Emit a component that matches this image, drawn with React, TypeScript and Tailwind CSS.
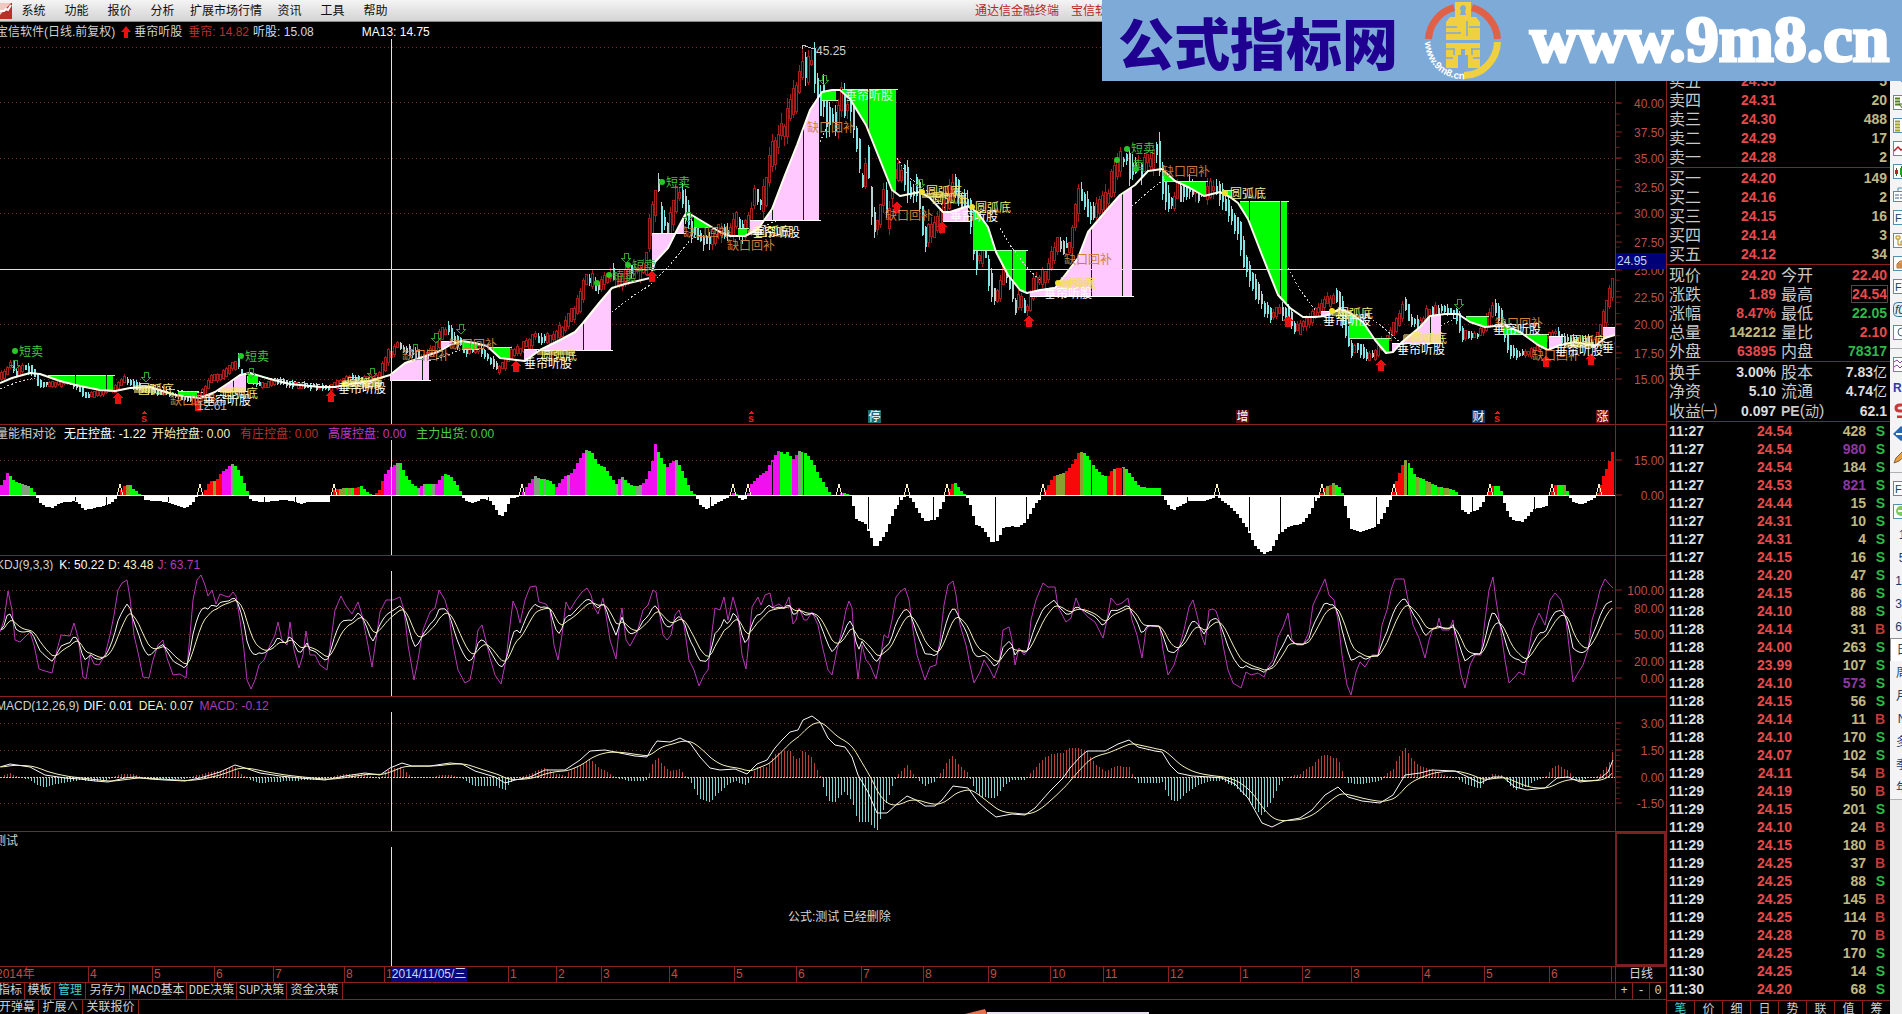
import React from "react";

type Pt = [number, number];

const parse = (s: string): Pt[] =>
  s
    .trim()
    .split(/\s+/)
    .map((p) => p.split(",").map(Number) as Pt);

const at = (pts: Pt[], x: number) => {
  if (x <= pts[0][0]) return pts[0][1];
  for (let i = 1; i < pts.length; i++) {
    if (x <= pts[i][0]) {
      const [x0, y0] = pts[i - 1];
      const [x1, y1] = pts[i];
      return x1 === x0 ? y1 : y0 + ((y1 - y0) * (x - x0)) / (x1 - x0);
    }
  }
  return pts[pts.length - 1][1];
};

const toPoints = (pts: Pt[]) => pts.map(([x, y]) => `${x},${y.toFixed(1)}`).join(" ");

const noise = (n: number) => {
  const v = Math.sin(n * 127.1 + 11.7) * 43758.5453;
  return v - Math.floor(v);
};

const PLOT_W = 1615;
const CROSS_X = 391;

/* ---------- price series ---------- */

const PRICE = parse(`0,378 8,370 12,362 15,374 22,368 32,370 40,384 55,384 70,380 80,388 84,396 100,393 115,388 125,378 130,382
145,390 170,394 185,398 195,401 205,390 212,378 222,376 230,368 238,362 240,375 250,380 260,385 280,382 300,385 330,388 350,378 365,380
380,375 388,356 398,345 410,352 420,358 435,350 442,332 448,328 455,340 462,345 466,350 480,350 492,362 498,369 506,362 512,352 520,350
528,343 535,337 545,340 555,336 562,330 568,320 573,315 580,303 583,287 587,280 593,283 600,285 610,275 620,280 630,270 640,272 646,262
650,228 655,205 658,188 661,220 667,230 673,215 676,197 682,195 685,210 690,225 700,235 707,245 713,240 720,228 730,230 736,222 742,230
750,222 755,195 760,205 766,188 772,155 776,145 780,132 785,135 790,110 796,95 800,75 803,60 807,80 811,62 814,72 817,95 823,100 830,120
838,115 840,95 845,110 851,105 857,140 862,180 868,165 872,210 876,230 885,190 888,225 893,175 898,175 905,170 910,190 918,190 925,240
932,230 940,220 946,205 952,182 958,190 962,200 970,210 975,260 985,255 992,290 998,300 1004,270 1010,280 1015,305 1022,300 1028,313
1034,285 1042,280 1050,265 1058,245 1070,250 1075,215 1080,190 1087,205 1094,215 1100,205 1107,200 1112,185 1118,160 1125,155 1132,170
1140,168 1150,160 1158,148 1164,190 1171,205 1178,190 1190,190 1202,195 1212,188 1220,195 1230,215 1238,225 1243,255 1250,275 1256,290
1263,305 1272,318 1280,308 1287,312 1296,330 1304,325 1312,315 1320,308 1330,300 1335,296 1341,305 1346,330 1351,350 1358,345 1365,355
1375,356 1380,345 1388,340 1396,325 1402,310 1405,302 1410,320 1420,322 1430,312 1440,310 1450,312 1458,315 1462,335 1470,335 1480,333
1488,320 1494,308 1500,315 1505,335 1510,350 1520,355 1535,350 1545,340 1555,333 1565,340 1580,340 1595,345 1602,330 1606,310 1612,290 1615,278`);

const MA = parse(`0,383 12,378 30,373 40,374 60,381 80,386 100,390 115,391 130,388 150,387 175,395 200,398 215,392 230,382 240,375 250,373
270,379 290,384 320,387 335,387 350,384 370,381 390,375 405,363 420,358 440,351 452,344 462,341 475,343 487,346 500,358 525,361 540,350
560,340 575,332 583,323 600,302 612,288 625,284 650,278 655,262 668,248 678,228 685,215 690,214 705,223 720,232 730,236 745,236 758,229
772,209 785,175 797,145 810,110 822,92 832,90 840,90 850,99 866,125 878,155 892,190 900,196 910,194 920,192 930,198 943,212 950,212
968,206 978,213 988,227 996,252 1008,275 1020,290 1027,293 1040,290 1055,288 1065,275 1078,258 1088,232 1105,212 1120,195 1135,185
1148,171 1162,169 1175,181 1190,188 1204,196 1220,192 1230,197 1238,203 1248,219 1262,255 1278,295 1290,308 1303,317 1315,317 1325,316
1340,309 1350,313 1363,322 1375,340 1386,353 1393,352 1402,342 1420,327 1430,316 1445,314 1458,314 1470,322 1485,327 1505,325 1520,332
1538,345 1548,350 1560,345 1575,342 1595,346 1605,338 1615,335`);

const LAGGED = [
  "0,389 15,383 35,378",
  "150,384 175,390 205,393",
  "262,377 290,381 330,386",
  "425,362 440,358 460,350",
  "612,312 630,298 650,285 670,265 690,240 702,234",
  "760,228 778,220",
  "820,142 824,133 830,120",
  "897,158 910,178 928,192 945,208",
  "1000,228 1010,245 1028,269 1040,280",
  "1132,206 1150,190 1165,179",
  "1288,268 1300,290 1316,311",
  "1366,315 1380,325 1400,342",
  "1440,326 1458,317",
].map(parse);

const PINK = "#ffc8ff";
const GREEN = "#00ff00";

const FILLS: [number, number, number, string][] = [
  [48, 113, 375, GREEN],
  [178, 197, 391, GREEN],
  [218, 246, 391, PINK],
  [248, 258, 383, GREEN],
  [390, 429, 380, PINK],
  [441, 452, 341, PINK],
  [462, 477, 349, GREEN],
  [488, 510, 347, GREEN],
  [524, 537, 349, PINK],
  [540, 611, 350, PINK],
  [652, 684, 233, PINK],
  [694, 716, 227, GREEN],
  [738, 747, 228, GREEN],
  [750, 819, 220, PINK],
  [822, 836, 100, GREEN],
  [842, 896, 89, GREEN],
  [943, 968, 221, PINK],
  [973, 1026, 250, GREEN],
  [1030, 1132, 296, PINK],
  [1164, 1206, 181, GREEN],
  [1222, 1232, 190, GREEN],
  [1240, 1287, 201, GREEN],
  [1321, 1336, 311, PINK],
  [1349, 1389, 338, GREEN],
  [1392, 1441, 343, PINK],
  [1466, 1487, 316, GREEN],
  [1503, 1547, 334, GREEN],
  [1549, 1562, 336, PINK],
  [1603, 1615, 327, PINK],
];

const YELLOW_BANDS: [number, number, number, number][] = [
  [134, 385, 20, 8],
  [220, 387, 26, 6],
  [342, 380, 40, 7],
  [537, 351, 38, 4],
  [748, 229, 14, 6],
  [922, 193, 26, 5],
  [1058, 280, 36, 6],
  [1332, 310, 20, 6],
  [1403, 334, 38, 8],
  [1564, 342, 30, 6],
];

const FILL_MARKS = [75, 106, 233, 422, 583, 772, 803, 868, 1012, 1091, 1122, 1249, 1280, 1430];

const TEXTS: [number, number, string, string][] = [
  [170, 400, "缺口回补", "#d0803c"],
  [402, 355, "缺口回补", "#d0803c"],
  [449, 344, "缺口回补", "#d0803c"],
  [683, 232, "缺口回补", "#d0803c"],
  [727, 245, "缺口回补", "#d0803c"],
  [807, 127, "缺口回补", "#d0803c"],
  [885, 215, "缺口回补", "#d0803c"],
  [1064, 259, "缺口回补", "#d0803c"],
  [1162, 171, "缺口回补", "#c07848"],
  [1495, 323, "缺口回补", "#d0803c"],
  [1532, 355, "缺口回补", "#d0803c"],
  [138, 389, "圆弧底", "#f0e878"],
  [222, 393, "圆弧底", "#f0e878"],
  [347, 383, "圆弧底", "#f0e878"],
  [541, 355, "圆弧底", "#f0e878"],
  [755, 231, "圆弧底", "#f0e878"],
  [926, 191, "圆弧底", "#f0e878"],
  [932, 198, "圆弧底", "#f0e060"],
  [975, 207, "圆弧底", "#f0e878"],
  [1060, 283, "圆弧底", "#f0e050"],
  [1230, 193, "圆弧底", "#f0e8a0"],
  [1337, 313, "圆弧底", "#f0e878"],
  [1411, 338, "圆弧底", "#f0e878"],
  [1570, 341, "圆弧底", "#f0e878"],
  [203, 400, "垂帘听股", "#ffffff"],
  [338, 388, "垂帘听股", "#ffffff"],
  [524, 363, "垂帘听股", "#ffffff"],
  [752, 232, "垂帘听股", "#ffffff"],
  [845, 95, "垂帘听股", "#d8ffd8"],
  [950, 216, "垂帘听股", "#ffffff"],
  [1044, 293, "垂帘听股", "#ffffff"],
  [1323, 320, "垂帘听股", "#ffffff"],
  [1397, 349, "垂帘听股", "#ffffff"],
  [1493, 329, "垂帘听股", "#ffffff"],
  [1555, 350, "垂帘听股", "#ffffff"],
  [1602, 347, "垂帘", "#ffffff"],
  [19, 351, "短卖", "#40c840"],
  [245, 356, "短卖", "#40c840"],
  [632, 265, "短卖", "#40b040"],
  [612, 276, "短卖", "#40b040"],
  [666, 182, "短卖", "#40c840"],
  [1131, 148, "短卖", "#40c840"],
  [1132, 165, "卖", "#30b030"],
  [816, 50, "45.25", "#d0d0d0"],
  [197, 405, "12.61", "#b8b8b8"],
];

const DOTS: Pt[] = [
  [15, 351], [241, 356], [597, 283], [609, 275], [628, 265], [662, 182], [1117, 160], [1127, 149], [1136, 169],
];
const YELLOW_DOTS: Pt[] = [[922, 192], [972, 207], [1225, 193], [1332, 311], [345, 384], [1058, 283]];
const DOWN_ARROWS: Pt[] = [
  [15, 365], [146, 377], [251, 373], [372, 373], [415, 349], [436, 338], [461, 329], [626, 258], [688, 217], [824, 80], [920, 184], [1459, 304],
];
const UP_ARROWS: Pt[] = [
  [118, 398], [198, 405], [331, 396], [516, 366], [652, 276], [897, 207], [942, 227], [1029, 321], [1288, 321], [1381, 365], [1546, 361], [1591, 359],
];

const BADGES: [number, string, string][] = [
  [868, "停", "#1c6c70"],
  [1236, "增", "#5a0c10"],
  [1472, "财", "#123a66"],
  [1596, "涨", "#6a0c14"],
];

/* ---------- lower indicators ---------- */

const ENERGY = parse(`0,8 4,14 8,23 11,20 15,15 20,13 27,11 33,8 37,0 40,-6 45,-10 53,-12 60,-7 75,-5 80,-8 85,-14 95,-12 105,-10 115,-5
118,0 120,3 124,10 130,12 133,8 138,4 143,0 146,-4 155,-5 168,-6 180,-10 186,-12 193,-8 197,-1 200,0 205,4 210,14 217,16 222,23 228,28
234,33 238,28 244,16 248,5 250,0 252,-5 265,-6 285,-4 297,-6 300,-8 310,-6 329,-6 331,0 336,7 347,8 355,8 362,10 368,4 374,1 380,6
385,21 391,28 397,33 401,33 407,20 415,10 420,8 425,12 437,12 445,23 452,19 460,8 463,0 466,-5 475,-7 482,-3 490,-4 496,-12 502,-22
507,-14 511,-2 520,-1 522,0 526,8 535,20 542,17 550,16 557,9 565,20 573,23 580,37 586,46 592,45 598,33 606,28 612,18 617,12 622,20
628,14 636,9 646,14 652,30 656,52 660,42 667,28 672,34 678,36 685,20 692,5 697,0 700,-8 708,-14 715,-8 725,-3 732,0 735,5 738,0 740,-2
745,-5 748,0 752,12 760,20 767,25 775,40 780,46 785,42 789,45 793,36 800,45 806,43 813,35 820,20 828,8 832,0 838,0 842,3 850,2 852,0
853,-5 857,-23 866,-28 876,-52 880,-47 887,-36 895,-15 903,-2 907,0 912,-2 916,-10 925,-25 937,-24 942,-10 947,0 949,5 955,15 960,7
966,1 970,-5 976,-28 984,-32 992,-46 998,-45 1004,-32 1012,-30 1018,-32 1027,-25 1035,-10 1042,-1 1043,0 1048,10 1055,20 1066,24
1074,33 1080,45 1087,42 1096,28 1104,20 1109,20 1113,27 1125,29 1131,22 1140,10 1148,8 1160,8 1163,0 1166,-4 1173,-15 1180,-10 1190,-5
1205,-5 1213,-2 1217,0 1221,-3 1230,-10 1240,-20 1248,-33 1256,-50 1264,-58 1272,-54 1280,-38 1290,-30 1302,-28 1310,-18 1316,-5
1321,0 1324,8 1334,13 1341,8 1344,0 1346,-10 1352,-33 1362,-36 1378,-30 1386,-15 1393,0 1397,15 1405,37 1410,32 1416,20 1428,15
1440,9 1452,7 1458,3 1460,0 1462,-13 1468,-18 1480,-13 1487,0 1493,10 1500,10 1503,2 1506,-12 1513,-24 1523,-26 1535,-13 1547,-10
1550,0 1556,11 1567,11 1569,0 1574,-6 1582,-9 1593,-3 1597,0 1604,20 1610,35 1615,50`);

const SPIKES = [120, 200, 334, 522, 733, 748, 839, 907, 947, 1043, 1217, 1322, 1394, 1490, 1552, 1599];
const RED_RUNS: [number, number][] = [[116, 134], [198, 221], [330, 362], [370, 382], [896, 1615]];
const ENERGY_MARKS = [75, 106, 168, 264, 295, 488, 710, 772, 803, 868, 899, 933, 995, 1026, 1091, 1122, 1187, 1249, 1280, 1314, 1376, 1407, 1472, 1534];

const J_LINE = parse(`0,632 4,620 8,591 12,610 15,640 20,642 25,637 30,632 34,645 39,669 45,671 52,673 57,650 61,635 70,636 74,623 78,637
83,677 86,679 90,655 94,664 99,665 105,655 110,635 114,615 118,590 122,583 127,580 130,598 134,635 139,657 143,677 149,678 153,660
158,645 163,640 167,658 173,675 180,674 186,678 190,635 193,600 197,580 201,575 205,585 208,596 212,590 216,604 220,594 225,596 229,597
233,592 236,596 240,620 244,650 247,680 251,689 255,680 259,665 264,660 270,645 275,635 278,622 282,640 287,645 290,622 294,650 299,668
303,655 306,631 310,655 315,655 320,665 327,670 331,640 335,610 341,596 346,606 352,614 358,602 362,615 367,640 372,667 376,640 380,612
386,600 393,600 400,597 404,610 408,645 414,680 418,660 423,630 430,612 435,608 439,590 445,600 449,615 453,645 458,670 465,683 470,680
474,660 478,630 482,625 487,645 490,658 495,675 501,684 506,660 510,625 513,601 517,610 520,623 525,600 530,587 536,586 539,602 546,604
550,610 554,645 558,660 562,635 566,602 570,610 576,600 582,592 587,588 591,595 594,607 598,614 603,598 606,615 610,640 616,659 620,620
622,608 626,640 630,646 637,633 643,610 648,605 653,590 656,592 659,610 663,635 667,640 671,635 675,615 679,610 684,625 689,660 694,670
699,686 704,675 708,670 711,640 715,608 720,610 724,597 728,620 733,597 738,615 742,655 746,669 749,640 752,607 758,597 761,605 765,595
770,593 773,607 779,604 784,608 789,597 793,624 796,620 799,608 804,620 807,620 812,612 818,625 822,645 828,670 832,675 837,650 842,630
846,610 849,601 852,608 855,650 858,679 862,645 866,660 870,665 876,679 880,660 884,635 888,638 892,620 896,597 900,592 905,588 909,600
913,630 917,655 925,680 930,667 936,665 940,640 944,605 948,585 953,581 956,595 960,625 966,645 970,665 974,683 980,672 984,660 989,668
994,678 999,665 1003,630 1009,627 1012,640 1015,665 1019,648 1024,655 1028,650 1031,620 1036,600 1043,583 1048,587 1055,587 1058,607
1066,622 1071,618 1076,598 1080,608 1088,617 1095,622 1103,638 1107,620 1111,598 1117,605 1122,603 1128,598 1132,620 1137,635 1142,658
1146,630 1149,626 1160,627 1163,650 1168,675 1174,665 1179,648 1184,630 1189,607 1193,600 1197,615 1202,637 1205,645 1209,610 1213,609
1216,611 1219,620 1223,645 1228,670 1233,683 1241,688 1246,672 1251,675 1258,673 1264,677 1268,667 1273,660 1278,637 1283,627 1288,613
1292,640 1297,645 1303,645 1309,632 1313,605 1319,592 1325,579 1329,595 1334,600 1338,620 1342,655 1347,685 1351,695 1356,672 1360,662
1365,667 1372,655 1378,655 1382,625 1387,610 1391,590 1395,579 1404,579 1408,600 1413,625 1419,638 1425,658 1429,640 1433,628 1437,627
1439,618 1442,630 1449,630 1453,620 1456,645 1461,675 1465,688 1470,665 1475,655 1481,655 1485,620 1489,590 1493,577 1496,600 1500,625
1505,660 1509,683 1514,678 1519,672 1524,675 1528,655 1532,630 1539,613 1545,625 1550,600 1555,593 1561,600 1566,620 1570,655 1573,682
1578,673 1583,665 1588,650 1592,620 1596,607 1600,590 1605,579 1609,584 1613,588`);

const DIF = parse(`0,767 10,764 30,767 45,775 65,778 80,779 95,781 108,782 125,778 135,777 150,779 165,780 185,781 200,778 220,772
235,765 245,768 260,773 280,776 300,778 325,780 345,776 365,773 380,775 390,768 402,763 412,766 430,766 450,763 462,764 475,771 495,777
505,783 515,780 530,777 545,770 565,770 580,760 590,751 605,750 620,753 635,756 647,757 652,748 657,741 670,742 680,738 690,743 700,757
710,768 720,770 735,769 747,774 757,764 767,760 775,748 782,740 790,732 798,730 803,720 812,716 820,722 828,738 835,745 845,747 852,757
858,775 868,792 877,813 887,813 897,804 907,796 916,800 925,806 935,806 942,800 953,786 968,788 978,802 987,810 996,817 1012,814
1025,815 1035,808 1050,791 1063,778 1070,768 1080,757 1087,751 1105,751 1118,744 1129,740 1138,747 1155,751 1162,752 1170,765 1178,773
1192,776 1210,777 1222,778 1235,784 1248,798 1262,823 1272,827 1284,821 1300,818 1312,810 1325,795 1338,787 1348,797 1362,801 1380,803
1393,795 1405,775 1420,773 1432,770 1455,771 1468,777 1480,783 1493,777 1503,777 1515,787 1527,790 1545,788 1557,778 1568,777 1580,782
1598,780 1608,772 1613,760`);

const STEP = 3;
const XS = Array.from({ length: Math.floor(PLOT_W / STEP) }, (_, i) => i * STEP + 1);

const KD = (() => {
  const k: Pt[] = [];
  const d: Pt[] = [];
  let prev = 630;
  for (const x of XS) {
    const kv = (3 * at(J_LINE, x) + 4 * prev) / 7;
    prev = (2 * prev + kv) / 3;
    k.push([x, kv]);
    d.push([x, prev]);
  }
  return { k, d };
})();

const DEA = (() => {
  let prev = 767;
  return XS.map((x): Pt => {
    prev = prev * 0.79 + at(DIF, x) * 0.21;
    return [x, prev];
  });
})();

/* ---------- drawing helpers ---------- */

function Plot({ top, height, children }: { top: number; height: number; children?: React.ReactNode }) {
  return (
    <svg
      className="block min-h-0 w-full flex-1"
      viewBox={`0 ${top} ${PLOT_W} ${height}`}
      preserveAspectRatio="none"
      fontSize="12"
      shapeRendering="crispEdges"
    >
      {children}
      <line x1={CROSS_X + 0.5} x2={CROSS_X + 0.5} y1={top} y2={top + height} stroke="#e0e0e0" />
    </svg>
  );
}

function Grid({ ys }: { ys: number[] }) {
  return (
    <g stroke="#7a2c22" strokeDasharray="1 3">
      {ys.map((y) => (
        <line key={y} x1="0" x2={PLOT_W} y1={y + 0.5} y2={y + 0.5} />
      ))}
    </g>
  );
}

function Axis({
  top,
  height,
  labels,
  minor = 0,
  children,
}: {
  top: number;
  height: number;
  labels: [number, string][];
  minor?: number;
  children?: React.ReactNode;
}) {
  const first = labels[0]?.[0] ?? 0;
  const last = labels[labels.length - 1]?.[0] ?? 0;
  const ticks = minor ? Array.from({ length: Math.floor((last - first) / minor) + 1 }, (_, i) => first + i * minor) : [];
  return (
    <svg
      className="block h-full w-[51px] shrink-0 border-l border-[#8a2020]"
      viewBox={`0 ${top} 50 ${height}`}
      preserveAspectRatio="none"
      fontSize="12"
      fill="#b8524a"
    >
      {ticks.map((y) => (
        <line key={y} x1="0" x2="4" y1={y} y2={y} stroke="#5a1818" />
      ))}
      {labels.map(([y, t]) => (
        <g key={y}>
          <line x1="0" x2="6" y1={y} y2={y} stroke="#8a2020" />
          <text x="48" y={y + 5} textAnchor="end">
            {t}
          </text>
        </g>
      ))}
      {children}
    </svg>
  );
}

function Panel({
  title,
  first,
  axis,
  children,
}: {
  title: React.ReactNode;
  first?: boolean;
  axis: React.ReactNode;
  children: React.ReactNode;
}) {
  return (
    <section className={`flex min-h-0 ${first ? "" : "border-t border-[#8a2020]"}`}>
      <div className="flex min-w-0 flex-1 flex-col overflow-hidden">
        <h2 className={`flex shrink-0 items-center overflow-hidden whitespace-nowrap ${first ? "h-[17px] pt-0.5" : "h-[15px] pt-0.5"}`}>{title}</h2>
        {children}
      </div>
      {axis}
    </section>
  );
}

function Candles() {
  return (
    <g>
      {XS.map((x, i) => {
        const y = at(PRICE, x);
        const slope = at(PRICE, x + 3) - at(PRICE, x - 3);
        const amp = 1 + (420 - y) * 0.035;
        const up = slope + (noise(i) - 0.5) * amp * 1.3 < 0;
        const mid = y + (noise(i + 900) - 0.5) * amp;
        const body = 1 + noise(i + 300) * amp * 0.8 + Math.min(Math.abs(slope) * 0.3, 9);
        const hi = mid - body - noise(i + 50) * amp;
        const lo = mid + body + noise(i + 70) * amp;
        const color = up ? "#a81c1c" : noise(i + 5) > 0.25 ? "#7fe4e4" : "#b8d0d0";
        return (
          <g key={x}>
            <line x1={x + 0.5} x2={x + 0.5} y1={hi} y2={lo} stroke={color} />
            <rect x={x - 0.5} y={mid - body} width="2" height={body * 2} fill={up ? "#000" : color} stroke={color} strokeWidth={up ? 1 : 0} />
          </g>
        );
      })}
    </g>
  );
}

function fillPoints(x0: number, x1: number, flat: number) {
  const xs = [x0, ...MA.map((p) => p[0]).filter((x) => x > x0 && x < x1), x1];
  return `${x0},${flat} ${toPoints(xs.map((x): Pt => [x, at(MA, x)]))} ${x1},${flat}`;
}

function DividendMark({ x }: { x: number }) {
  return (
    <g fill="#e02020">
      <path d={`M${x} 411l-3 3h6z`} />
      <text x={x - 3} y="422" fontSize="11" fontWeight="bold">
        s
      </text>
    </g>
  );
}

function PricePlot() {
  return (
    <Plot top={39} height={385}>
      <Grid ys={[47, 102, 158, 213, 324, 379]} />
      <Candles />
      {FILLS.map(([x0, x1, flat, color]) => (
        <g key={`${x0}-${flat}`}>
          <polygon points={fillPoints(x0, x1, flat)} fill={color} />
          <line x1={x0} x2={x1 + 2} y1={flat + 0.5} y2={flat + 0.5} stroke={color === PINK ? "#fff" : "#b0ffb0"} />
        </g>
      ))}
      {FILL_MARKS.map((x) => {
        const f = FILLS.find(([a, b]) => x > a && x < b);
        return f ? <line key={x} x1={x + 0.5} x2={x + 0.5} y1={f[2]} y2={at(MA, x)} stroke="#102010" /> : null;
      })}
      <g fill="#f8d878">
        {YELLOW_BANDS.map(([x, y, w, h]) => (
          <rect key={x} x={x} y={y} width={w} height={h} rx="2" opacity="0.6" />
        ))}
      </g>
      <g fill="none" stroke="#d0d0d0" strokeDasharray="2 2">
        {LAGGED.map((l) => (
          <polyline key={l[0][0]} points={toPoints(l)} />
        ))}
      </g>
      <polyline points={toPoints(MA)} fill="none" stroke="#fffff0" strokeWidth="2" strokeLinejoin="round" shapeRendering="auto" />
      <line x1="0" x2={PLOT_W} y1="269.5" y2="269.5" stroke="#e0e0e0" />
      <g fill="none" stroke="#30a030">
        {DOWN_ARROWS.map(([x, y]) => (
          <path key={x} d={`M${x - 2} ${y - 5}h4v5h3l-5 5l-5 -5h3z`} />
        ))}
      </g>
      <g fill="#e81010">
        {UP_ARROWS.map(([x, y]) => (
          <path key={x} d={`M${x} ${y - 6}l5 6h-2v6h-6v-6h-2z`} />
        ))}
      </g>
      <g fill="#28c828" shapeRendering="auto">
        {DOTS.map(([x, y]) => (
          <circle key={x} cx={x} cy={y} r="3" />
        ))}
      </g>
      <g fill="#f0e030" shapeRendering="auto">
        {YELLOW_DOTS.map(([x, y]) => (
          <circle key={x} cx={x} cy={y} r="3" />
        ))}
      </g>
      <path d="M802 49v-4h4M802 45l12 4" fill="none" stroke="#c8c8c8" />
      {TEXTS.map(([x, y, t, c]) => (
        <text key={`${x}-${y}`} x={x} y={y + 5} fill={c}>
          {t}
        </text>
      ))}
      <DividendMark x={144} />
      <DividendMark x={751} />
      <DividendMark x={1497} />
      {BADGES.map(([x, t, c]) => (
        <g key={t}>
          <rect x={x} y="410" width="13" height="13" fill={c} />
          <text x={x + 0.5} y="421" fill="#fff">
            {t}
          </text>
        </g>
      ))}
    </Plot>
  );
}

function EnergyPlot() {
  const base = 496;
  return (
    <Plot top={440} height={115}>
      <Grid ys={[460]} />
      {XS.map((x, i) => {
        const v = at(ENERGY, x + 1);
        if (Math.abs(v) < 0.6) return null;
        const rising = at(ENERGY, x + 3) > at(ENERGY, x - 1) + 0.2;
        const flat = Math.abs(at(ENERGY, x + 3) - at(ENERGY, x - 1)) < 2.2 && noise(i + 41) > 0.6;
        const red = RED_RUNS.some(([a, b]) => x >= a && x <= b);
        const rise = red ? "#f80808" : "#f010f0";
        const color = v < 0 ? "#ffffff" : flat ? (red ? "#88a030" : "#80a080") : rising ? rise : GREEN;
        return <rect key={x} x={x - 1} y={v > 0 ? base - v : base} width="3" height={Math.abs(v)} fill={color} />;
      })}
      {ENERGY_MARKS.map((x) => {
        const v = at(ENERGY, x);
        return <line key={x} x1={x + 0.5} x2={x + 0.5} y1={base + 1} y2={base - v} stroke="#000" />;
      })}
      <line x1="0" x2={PLOT_W} y1={base - 0.5} y2={base - 0.5} stroke="#fff8d0" />
      {SPIKES.map((x) => (
        <path key={x} d={`M${x - 3} ${base}L${x} ${base - 12}L${x + 3} ${base}`} fill="none" stroke="#f8f0c0" />
      ))}
    </Plot>
  );
}

function KdjPlot() {
  return (
    <Plot top={571} height={125}>
      <Grid ys={[590, 608, 634, 661, 678]} />
      <g fill="none" shapeRendering="auto">
        <polyline points={toPoints(J_LINE)} stroke="#b838b8" />
        <polyline points={toPoints(KD.k)} stroke="#f8f8f8" />
        <polyline points={toPoints(KD.d)} stroke="#f4f0b8" />
      </g>
    </Plot>
  );
}

function MacdPlot() {
  const base = 777.5;
  return (
    <Plot top={712} height={119}>
      <Grid ys={[723, 750, 803]} />
      {DEA.map(([x, dea]) => {
        const v = 2.3 * (dea - at(DIF, x));
        return <line key={x} x1={x + 0.5} x2={x + 0.5} y1={base} y2={base - v} stroke={v > 0 ? "#b84038" : "#80d0d0"} />;
      })}
      <line x1="0" x2={PLOT_W} y1={base} y2={base} stroke="#d0c8b0" strokeDasharray="2 1" />
      <g fill="none" shapeRendering="auto">
        <polyline points={toPoints(DIF)} stroke="#f8f8f8" />
        <polyline points={toPoints(DEA)} stroke="#f4f0b8" />
      </g>
    </Plot>
  );
}

/* ---------- time scale ---------- */

const MONTHS: [number, string][] = [
  [0, "2014年"], [89, "4"], [153, "5"], [215, "6"], [274, "7"], [345, "8"], [385, "1"], [509, "1"], [557, "2"], [602, "3"], [670, "4"],
  [735, "5"], [797, "6"], [862, "7"], [924, "8"], [989, "9"], [1051, "10"], [1104, "11"], [1169, "12"], [1241, "1"], [1303, "2"],
  [1352, "3"], [1423, "4"], [1485, "5"], [1550, "6"], [1612, ""], [1615, ""],
];

function TimeScale() {
  return (
    <div className="flex h-4 shrink-0 border-t border-[#8a2020]">
      <div className="relative flex min-w-0 flex-1 text-[12px] leading-[15px] text-[#c04c44]">
        {MONTHS.slice(0, -1).map(([x, label], i) => (
          <span
            key={x}
            className={`box-content basis-0 overflow-hidden whitespace-nowrap ${i ? "-ml-px border-l border-[#8a2020]" : ""}`}
            style={{ flexGrow: MONTHS[i + 1][0] - x }}
          >
            <span className={i ? "pl-px" : "-ml-1"}>{label}</span>
          </span>
        ))}
        <span className="absolute inset-y-0 left-[24.2%] bg-[#08087c] px-px whitespace-nowrap text-[#c8d8f8]">2014/11/05/三</span>
      </div>
      <div className="w-[51px] shrink-0 border-l border-[#8a2020] text-center text-[12px] leading-[15px] text-[#d8d8d8]">日线</div>
    </div>
  );
}

/* ---------- quote column ---------- */

const SELLS = [["卖五", "24.35", "5"], ["卖四", "24.31", "20"], ["卖三", "24.30", "488"], ["卖二", "24.29", "17"], ["卖一", "24.28", "2"]];
const BUYS = [["买一", "24.20", "149"], ["买二", "24.16", "2"], ["买三", "24.15", "16"], ["买四", "24.14", "3"], ["买五", "24.12", "34"]];

const RED = "text-[#e84a4a]";
const GRN = "text-[#30b848]";
const SAND = "text-[#c0b884]";
const WHT = "text-[#dcdcdc]";

const STATS = [
  ["现价", "24.20", RED, "今开", "22.40", RED],
  ["涨跌", "1.89", RED, "最高", "24.54", RED],
  ["涨幅", "8.47%", RED, "最低", "22.05", GRN],
  ["总量", "142212", SAND, "量比", "2.10", RED],
  ["外盘", "63895", RED, "内盘", "78317", GRN],
];
const FUNDAMENTALS = [
  ["换手", "3.00%", WHT, "股本", "7.83亿", WHT],
  ["净资", "5.10", WHT, "流通", "4.74亿", WHT],
  ["收益㈠", "0.097", WHT, "PE(动)", "62.1", WHT],
];

const TICKS = `11:27 24.54 428 S|11:27 24.54 980 S|11:27 24.54 184 S|11:27 24.53 821 S|11:27 24.44 15 S|11:27 24.31 10 S|11:27 24.31 4 S|11:27 24.15 16 S
|11:28 24.20 47 S|11:28 24.15 86 S|11:28 24.10 88 S|11:28 24.14 31 B|11:28 24.00 263 S|11:28 23.99 107 S|11:28 24.10 573 S|11:28 24.15 56 S
|11:28 24.14 11 B|11:28 24.10 170 S|11:28 24.07 102 S|11:29 24.11 54 B|11:29 24.19 50 B|11:29 24.15 201 S|11:29 24.10 24 B|11:29 24.15 180 B
|11:29 24.25 37 B|11:29 24.25 88 S|11:29 24.25 145 B|11:29 24.25 114 B|11:29 24.28 70 B|11:29 24.25 170 S|11:30 24.25 14 S|11:30 24.20 68 S`
  .split("|")
  .map((r) => r.trim().split(" "));

function DepthTable({ rows }: { rows: string[][] }) {
  return (
    <table className="w-full table-fixed">
      <tbody>
        {rows.map(([name, price, vol]) => (
          <tr key={name} className="h-[19px] text-[14px] leading-[19px]">
            <th className="w-[50px] p-0 pl-0.5 text-left text-[16px] leading-[19px] font-normal text-[#c8c8c8]">{name}</th>
            <td className="w-[59px] p-0 text-right font-bold text-[#e84a4a]">{price}</td>
            <td className="p-0 pr-[3px] text-right font-bold text-[#c0b884]">{vol}</td>
          </tr>
        ))}
      </tbody>
    </table>
  );
}

function StatTable({ rows }: { rows: string[][] }) {
  return (
    <table className="w-full table-fixed whitespace-nowrap">
      <tbody>
        {rows.map(([a, av, ac, b, bv, bc]) => (
          <tr key={a} className="h-[19px] text-[14px] leading-[19px]">
            <th className="w-[50px] p-0 pl-0.5 text-left text-[16px] leading-[19px] font-normal text-[#c8c8c8]">{a}</th>
            <td className={`w-[59px] p-0 text-right font-bold ${ac}`}>{av}</td>
            <th className="w-[48px] p-0 pl-[5px] text-left text-[16px] leading-[19px] font-normal text-[#c8c8c8]">
              {b === "PE(动)" ? (
                <>
                  <b className="text-[14px]">PE</b>(<span className="text-[14px]">动</span>)
                </>
              ) : (
                b
              )}
            </th>
            <td className={`p-0 pr-[3px] text-right font-bold ${bc}`}>
              <span className={b === "最高" ? "outline outline-[#4a4a4a]" : ""}>{bv.replace("亿", "")}</span>
              {bv.includes("亿") && <span className="text-[14px] font-normal">亿</span>}
            </td>
          </tr>
        ))}
      </tbody>
    </table>
  );
}

function Quotes() {
  const line = "border-t border-[#8a2020]";
  return (
    <aside className="flex w-[224px] shrink-0 flex-col overflow-hidden border-l border-[#8a2020]">
      <div className="h-[50px] shrink-0" />
      <DepthTable rows={SELLS} />
      <div className={`${line} pt-px`}>
        <DepthTable rows={BUYS} />
      </div>
      <div className={`${line} pt-px`}>
        <StatTable rows={STATS} />
      </div>
      <div className={`${line} pt-px`}>
        <StatTable rows={FUNDAMENTALS} />
      </div>
      <table className={`w-full table-fixed ${line}`}>
        <tbody>
          {TICKS.map(([t, p, v, s], i) => (
            <tr key={i} className="h-[18px] text-[14px] leading-[18px] font-bold">
              <td className="w-[60px] p-0 pl-0.5 text-[#dcdcdc]">{t}</td>
              <td className="w-[65px] p-0 text-right text-[#e84a4a]">{p}</td>
              <td className={`w-[74px] p-0 text-right ${Number(v) > 500 ? "text-[#8c38a0]" : "text-[#c0b884]"}`}>{v}</td>
              <td className={`p-0 pr-[5px] text-right ${s === "S" ? "text-[#30b848]" : "text-[#c03c38]"}`}>{s}</td>
            </tr>
          ))}
        </tbody>
      </table>
      <nav className={`mt-auto flex h-[14px] shrink-0 overflow-hidden ${line}`}>
        {["笔", "价", "细", "日", "势", "联", "值", "筹"].map((t, i) => (
          <button
            key={t}
            className={`flex-1 text-[12px] leading-[16px] ${i ? "border-l border-[#8a2020] text-[#d0d0d0]" : "text-[#40d0d0]"}`}
          >
            {t}
          </button>
        ))}
      </nav>
    </aside>
  );
}

/* ---------- right tool strip ---------- */

const frame = <rect x="0.5" y="0.5" width="15" height="14" fill="#fff" stroke="#5090b0" />;

const TOOL_ICONS: { name: string; art: React.ReactNode }[] = [
  { name: "返回", art: <path d="M2 1L9 9l7-3" fill="none" stroke="#607890" strokeWidth="2" /> },
  { name: "报价", art: <>{frame}<path d="M2 3.500h5M2 6.500h5M2 9.500h5M9 3.500h5" stroke="#508020" strokeWidth="2" /><path d="M6 9l4 5 2-5z" fill="#d8e8b0" stroke="#506030" /></> },
  { name: "列表", art: <>{frame}<path d="M2 3.500h5M2 6.500h5M2 9.500h5M2 12.500h5M9 3.500h5M9 6.500h5M9 9.500h5" stroke="#a0a020" strokeWidth="2" /></> },
  { name: "分时", art: <>{frame}<path d="M1 10l4-4 3 3 4-2 3 2" fill="none" stroke="#b02020" strokeWidth="1.500" /></> },
  { name: "K线", art: <>{frame}<path d="M3.500 4v8M8.500 2v11" stroke="#306030" /><rect x="2" y="6" width="3" height="4" fill="#c02020" /><rect x="7" y="4" width="3" height="7" fill="#20a020" /></> },
  { name: "资料", art: <><path d="M5 4V1h10v10" fill="none" stroke="#5090b0" /><rect x="0.500" y="4.500" width="12" height="10" fill="#fff" stroke="#5090b0" /><path d="M2 8h4M7 8h4M2 11h4M7 11h4" stroke="#406080" /></> },
  { name: "F1", art: <>{frame}<text x="2" y="12" fontSize="11" fill="#204060">F1</text></> },
  { name: "结构", art: <>{frame}<path d="M3 3h4v3H3zM5 6v6h3M8 8h5v4H8z" fill="#fff0c0" stroke="#b08830" /></> },
  { name: "数据", art: <>{frame}<path d="M4 12h8V5H7L4 8z" fill="#f0a860" stroke="#b07030" /><path d="M5 8h6M5 10h6" stroke="#b07030" /></> },
  { name: "F10", art: <>{frame}<text x="2" y="12" fontSize="11" fill="#204060">F1</text></> },
  { name: "公式", art: <><rect x="0.500" y="0.500" width="15" height="14" rx="4" fill="#e0f0f8" stroke="#407090" /><text x="2" y="12" fontSize="12" fontStyle="italic" fill="#204060">f0</text></> },
  { name: "查找", art: <>{frame}<circle cx="9" cy="7" r="4" fill="none" stroke="#406080" /></> },
];

const TOOL_ICONS_2: { name: string; art: React.ReactNode }[] = [
  { name: "叠加", art: <>{frame}<path d="M1 5l3-2 3 3 3-3 4 3M1 10l3-2 3 3 3-3 4 3" fill="none" stroke="#8040a0" /></> },
  { name: "RSI", art: <text x="0" y="12" fontSize="12" fontWeight="bold" fill="#3038a8">R</text> },
  { name: "资金", art: <path d="M13 2H7Q3 2 3 5T7 8h4q3 0 3 3t-4 3H4" fill="none" stroke="#c83838" strokeWidth="3" /> },
  { name: "定位", art: <><path d="M8 0l8 8-8 7-8-7z" fill="#2868b0" /><path d="M3 8h8" stroke="#fff" strokeWidth="2" /></> },
  { name: "画线", art: <path d="M1 14l2-5 8-8 4 3-9 8z" fill="#e8a040" stroke="#806040" /> },
];

const TOOL_ICONS_3: { name: string; art: React.ReactNode }[] = [
  { name: "F9", art: <>{frame}<text x="2" y="12" fontSize="11" fill="#204060">F9</text></> },
  { name: "刷新", art: <>{frame}<circle cx="8" cy="7" r="5" fill="#80c860" /><path d="M5 7h6" stroke="#fff" strokeWidth="2" /></> },
];

function ToolGroup({ icons }: { icons: { name: string; art: React.ReactNode }[] }) {
  return (
    <>
      {icons.map(({ name, art }) => (
        <button key={name} aria-label={name} className="flex h-[23px] w-full items-center pl-[3px]">
          <svg width="16" height="15" viewBox="0 0 16 15" className="shrink-0">
            {art}
          </svg>
        </button>
      ))}
    </>
  );
}

function ToolStrip() {
  return (
    <nav className="flex w-3 shrink-0 flex-col overflow-hidden bg-[#ececec]">
      <div className="flex flex-col bg-[#f4f4f6] pt-[46px]">
        <ToolGroup icons={TOOL_ICONS} />
        <hr className="my-1 border-[#b0b0b0]" />
        <ToolGroup icons={TOOL_ICONS_2} />
        <hr className="my-1 border-[#b0b0b0]" />
        <ToolGroup icons={TOOL_ICONS_3} />
        {["1", "5", "15", "30", "60", "日", "周", "月", "N", "多", "季", "年"].map((t) => (
          <button
            key={t}
            className={`h-[23px] w-6 shrink-0 text-center text-[12px] leading-[22px] text-[#203c68] ${
              t === "日" ? "border-t border-l border-[#909090] bg-white" : ""
            }`}
          >
            {t}
          </button>
        ))}
        <hr className="border-[#b0b0b0]" />
      </div>
    </nav>
  );
}

/* ---------- top ---------- */

function Logo() {
  return (
    <svg width="78" height="78" viewBox="-39 -39 78 78" className="shrink-0">
      <g fill="none" strokeWidth="7">
        <path d="M-34.500 -2A34.500 34.500 0 0 1 -9 -33.300M9 -33.300A34.500 34.500 0 0 1 34.500 -2" stroke="#e06048" />
        <path d="M34.500 1A34.500 34.500 0 0 1 1 34.500" stroke="#f0d040" />
      </g>
      <path id="logo-arc" d="M-38 0A38 38 0 0 0 4 38" fill="none" />
      <text fontSize="10" fontWeight="bold" fill="#fff">
        <textPath href="#logo-arc" startOffset="1">
          www.9m8.cn
        </textPath>
      </text>
      <g fill="#f0d040">
        <path
          fillRule="evenodd"
          d="M-8 -39H8V-24H13L17 -19V-1H-17V-19L-13 -24H-8ZM0 -36A3.500 3.500 0 0 0 -2 -30L-3 -26H3L2 -30A3.500 3.500 0 0 0 0 -36Z"
        />
        <path d="M-17 2H17V27H5V14H2V8H-2V14H-5V27H-17Z" />
      </g>
      <path d="M-17 -14H-6M-17 -8H-2M6 -14H17M4 -20V-5M-17 8H-8M8 8H17M-17 17H-10M10 17H17M-9 8V14M9 8V14" stroke="#80a8d8" strokeWidth="1.500" />
    </svg>
  );
}

function Banner() {
  return (
    <div className="absolute top-0 right-0 flex h-[81px] w-[800px] items-center overflow-hidden bg-[#7eaad8] whitespace-nowrap">
      <span className="w-[322px] pl-4 font-['Noto_Sans_CJK_SC',sans-serif] text-[56px] leading-[72px] font-black text-[#1f0090]">公式指标网</span>
      <Logo />
      <a
        href="#home"
        className="pl-7 pb-1 font-['Liberation_Serif',serif] text-[66px] leading-[70px] font-bold text-white [-webkit-text-stroke:3px_white]"
      >
        www.9m8.cn
      </a>
    </div>
  );
}

const MENUS = ["系统", "功能", "报价", "分析", "扩展市场行情", "资讯", "工具", "帮助"];

function MenuBar() {
  return (
    <header className="flex h-[22px] shrink-0 items-center border-b border-[#888] bg-linear-to-b from-[#f4f4f4] to-[#d4d4d4] text-[12px] text-[#101010]">
      <svg width="12" height="16" viewBox="0 0 12 16" className="shrink-0">
        <rect width="12" height="16" fill="#b83028" />
        <path d="M0 0h11L0 12z" fill="#f0c8c0" />
        <path d="M0 8h4l2-2 2 1 3-5" fill="none" stroke="#fff" strokeWidth="2" />
      </svg>
      <nav className="flex">
        {MENUS.map((m) => (
          <button key={m} className="min-w-[43px] px-1.5 whitespace-nowrap">
            {m}
          </button>
        ))}
      </nav>
      <div className="ml-auto flex w-[927px] gap-3 overflow-hidden whitespace-nowrap text-[#b82828]">
        <span>通达信金融终端</span>
        <span>宝信软件</span>
      </div>
    </header>
  );
}

const TABS: [string, string][] = [
  ["指标", "w-[25px]"],
  ["模板", "w-[30px]"],
  ["管理", "w-[31px]"],
  ["另存为", "w-[44px]"],
  ["MACD基本", "w-[57px]"],
  ["DDE决策", "w-[50px]"],
  ["SUP决策", "w-[50px]"],
  ["资金决策", "w-[56px]"],
];

const LINKS: [string, string][] = [
  ["开弹幕", "w-[39px]"],
  ["扩展∧", "w-[44px]"],
  ["关联报价", "w-[56px]"],
];

function TabRow({ items, active, children }: { items: [string, string][]; active?: string; children?: React.ReactNode }) {
  return (
    <div className="flex shrink-0 overflow-hidden border-t border-[#8a2020] font-['Liberation_Mono','Noto_Sans_CJK_SC',monospace] text-[12px] leading-4">
      {items.map(([t, w], i) => (
        <button
          key={t}
          className={`flex justify-center overflow-hidden border-r border-[#8a2020] whitespace-nowrap ${w} ${
            t === active ? "text-[#40d0d0]" : "text-[#d0d0d0]"
          }`}
        >
          <span className={i ? "" : "-ml-1"}>{t}</span>
        </button>
      ))}
      {children}
    </div>
  );
}

export default function App() {
  return (
    <div className="relative flex h-screen flex-col overflow-hidden bg-black font-['Liberation_Sans','Noto_Sans_CJK_SC',sans-serif] text-[12px] leading-4 text-[#d0d0d0]">
      <MenuBar />
      <div className="flex min-h-0 flex-1">
        <main className="flex min-w-0 flex-1 flex-col">
          <div className="grid min-h-0 flex-1 grid-rows-[402fr_131fr_141fr_135fr_135fr]">
            <Panel
              first
              axis={
                <Axis
                  top={22}
                  height={402}
                  minor={11.08}
                  labels={[[103, "40.00"], [132, "37.50"], [158, "35.00"], [187, "32.50"], [213, "30.00"], [242, "27.50"], [270, "25.00"], [297, "22.50"], [324, "20.00"], [353, "17.50"], [379, "15.00"]]}
                >
                  <rect x="0" y="253" width="50" height="16" fill="#000078" />
                  <text x="1" y="265" fill="#c0d8f0">
                    24.95
                  </text>
                </Axis>
              }
              title={
                <>
                  <span className="-ml-1">宝信软件(日线.前复权)</span>
                  <svg width="10" height="12" viewBox="0 0 10 12" className="mr-[3px] ml-1.5 shrink-0">
                    <path d="M5 0l5 6H7v6H3V6H0z" fill="#e81010" />
                  </svg>
                  <span>垂帘听股</span>
                  <span className="ml-1.5 text-[#b83028]">垂帘: 14.82</span>
                  <span className="ml-1 text-[#d0d8f0]">听股: 15.08</span>
                  <span className="ml-12 text-white">MA13: 14.75</span>
                </>
              }
            >
              <PricePlot />
            </Panel>
            <Panel
              axis={<Axis top={425} height={130} labels={[[460, "15.00"], [495, "0.00"]]} />}
              title={
                <>
                  <span className="-ml-1">量能相对论</span>
                  <span className="ml-2 text-white">无庄控盘: -1.22</span>
                  <span className="ml-1.5 text-[#f4f0c0]">开始控盘: 0.00</span>
                  <span className="ml-2.5 text-[#b83028]">有庄控盘: 0.00</span>
                  <span className="ml-2.5 text-[#c038c8]">高度控盘: 0.00</span>
                  <span className="ml-2.5 text-[#48d048]">主力出货: 0.00</span>
                </>
              }
            >
              <EnergyPlot />
            </Panel>
            <Panel
              axis={<Axis top={556} height={140} labels={[[590, "100.00"], [608, "80.00"], [634, "50.00"], [661, "20.00"], [678, "0.00"]]} />}
              title={
                <>
                  <span className="-ml-1">KDJ(9,3,3)</span>
                  <span className="ml-1.5 text-white">K: 50.22</span>
                  <span className="ml-1 text-[#f4f0c0]">D: 43.48</span>
                  <span className="ml-1 text-[#b838b8]">J: 63.71</span>
                </>
              }
            >
              <KdjPlot />
            </Panel>
            <Panel
              axis={<Axis top={697} height={134} minor={5.4} labels={[[723, "3.00"], [750, "1.50"], [777, "0.00"], [803, "-1.50"]]} />}
              title={
                <>
                  <span className="-ml-1">MACD(12,26,9)</span>
                  <span className="ml-1 text-white">DIF: 0.01</span>
                  <span className="ml-1.5 text-[#f4f0c0]">DEA: 0.07</span>
                  <span className="ml-1.5 text-[#b838b8]">MACD: -0.12</span>
                </>
              }
            >
              <MacdPlot />
            </Panel>
            <Panel
              axis={<div className="w-[51px] shrink-0 border-2 border-[#7a2020]" />}
              title={<span className="-ml-1.5">测试</span>}
            >
              <Plot top={847} height={119}>
                <text x="788" y="921" fill="#d8d8d8">
                  公式:测试 已经删除
                </text>
              </Plot>
            </Panel>
          </div>
          <TimeScale />
          <TabRow items={TABS} active="管理">
            <div className="ml-auto flex w-[51px] border-l border-[#8a2020]">
              {["+", "-", "0"].map((t) => (
                <button key={t} className="flex-1 border-r border-[#8a2020] text-center last:border-r-0">
                  {t}
                </button>
              ))}
            </div>
          </TabRow>
          <div className="relative h-[15px] shrink-0 overflow-hidden">
            <TabRow items={LINKS} />
            <svg className="absolute bottom-0 left-[57.9%]" width="184" height="5" viewBox="0 0 184 5">
              <path d="M0 5L20 0l2 5z" fill="#e87050" />
              <rect x="22" y="3" width="162" height="2" fill="#e8e0f0" />
            </svg>
          </div>
        </main>
        <Quotes />
        <ToolStrip />
      </div>
      <Banner />
    </div>
  );
}
